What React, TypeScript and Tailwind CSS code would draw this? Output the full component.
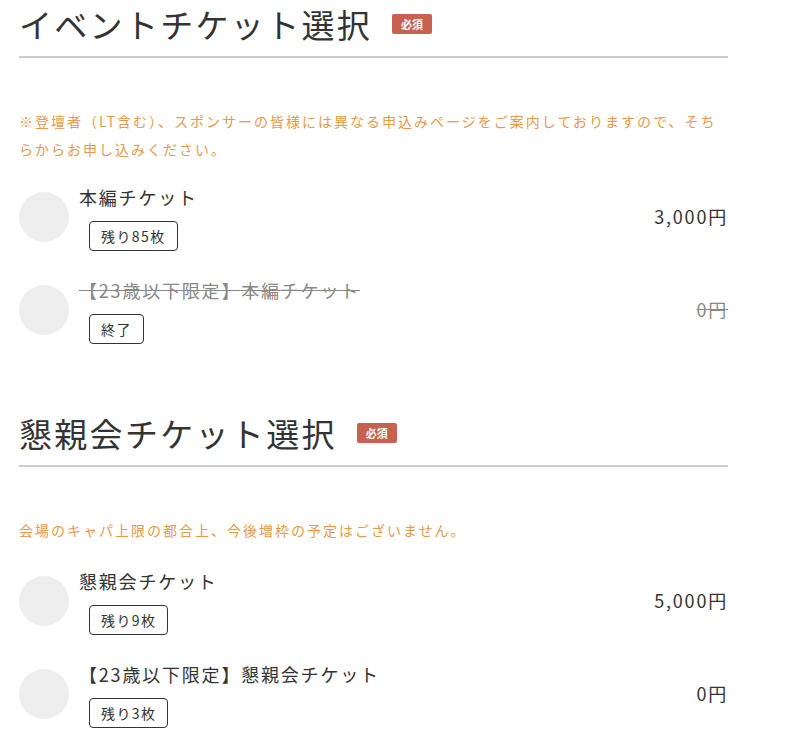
import React from 'react';

// チケットの型定義
interface Ticket {
  name: string;
  badge: string;
  price: string;
  closed?: boolean;
}

interface SectionProps {
  title: string;
  note: string;
  tickets: Ticket[];
  listTop: string;
}

const font = { fontFamily: '"Noto Sans CJK JP", "Noto Sans", sans-serif' };

function TicketRow({ ticket }: { ticket: Ticket }) {
  return (
    <div className="flex items-center py-3">
      <div className="w-[50px] h-[50px] rounded-full bg-[#eeeeee] shrink-0" />
      <div className="ml-[10px] flex flex-col items-start">
        <div
          className={`text-[18px] leading-[30px] tracking-[0.1em] ${
            ticket.closed ? 'text-[#888] line-through' : 'text-[#333]'
          }`}
        >
          {ticket.name}
        </div>
        <div className="mt-[9px] ml-[10px] h-[30px] px-[11px] flex items-center border border-[#333] rounded-[4px] text-[14px] tracking-[0.1em] text-[#333]">
          {ticket.badge}
        </div>
      </div>
      <div
        className={`ml-auto text-[18px] tracking-[0.1em] ${
          ticket.closed ? 'text-[#888] line-through' : 'text-[#333]'
        }`}
      >
        {ticket.price}
      </div>
    </div>
  );
}

function Section({ title, note, tickets, listTop }: SectionProps) {
  return (
    <section>
      <div className="flex items-center pb-[8px] border-b-2 border-[#cccccc]">
        <h2 className="text-[33px] leading-[48px] tracking-[0.07em] text-[#333]">{title}</h2>
        <span className="ml-[20px] w-[40px] h-[20px] flex items-center justify-center rounded-[2px] bg-[#c8614f] text-white text-[11px] font-bold">
          必須
        </span>
      </div>
      <p className="mt-[49px] text-[14px] leading-[28px] tracking-[2px] text-[#e8994a]">{note}</p>
      <div className={listTop}>
        {tickets.map((t) => (
          <TicketRow key={t.name} ticket={t} />
        ))}
      </div>
    </section>
  );
}

export default function App() {
  return (
    <div className="bg-white min-h-[747px] pl-[19px]" style={font}>
      <div className="w-[709px]">
        <Section
          title="イベントチケット選択"
          note="※登壇者（LT含む）、スポンサーの皆様には異なる申込みページをご案内しておりますので、そちらからお申し込みください。"
          listTop="mt-[7px]"
          tickets={[
            { name: '本編チケット', badge: '残り85枚', price: '3,000円' },
            { name: '【23歳以下限定】本編チケット', badge: '終了', price: '0円', closed: true },
          ]}
        />
        <div className="mt-[53px]">
          <Section
            title="懇親会チケット選択"
            note="会場のキャパ上限の都合上、今後増枠の予定はございません。"
            listTop="mt-[10px]"
            tickets={[
              { name: '懇親会チケット', badge: '残り9枚', price: '5,000円' },
              { name: '【23歳以下限定】懇親会チケット', badge: '残り3枚', price: '0円' },
            ]}
          />
        </div>
      </div>
    </div>
  );
}
